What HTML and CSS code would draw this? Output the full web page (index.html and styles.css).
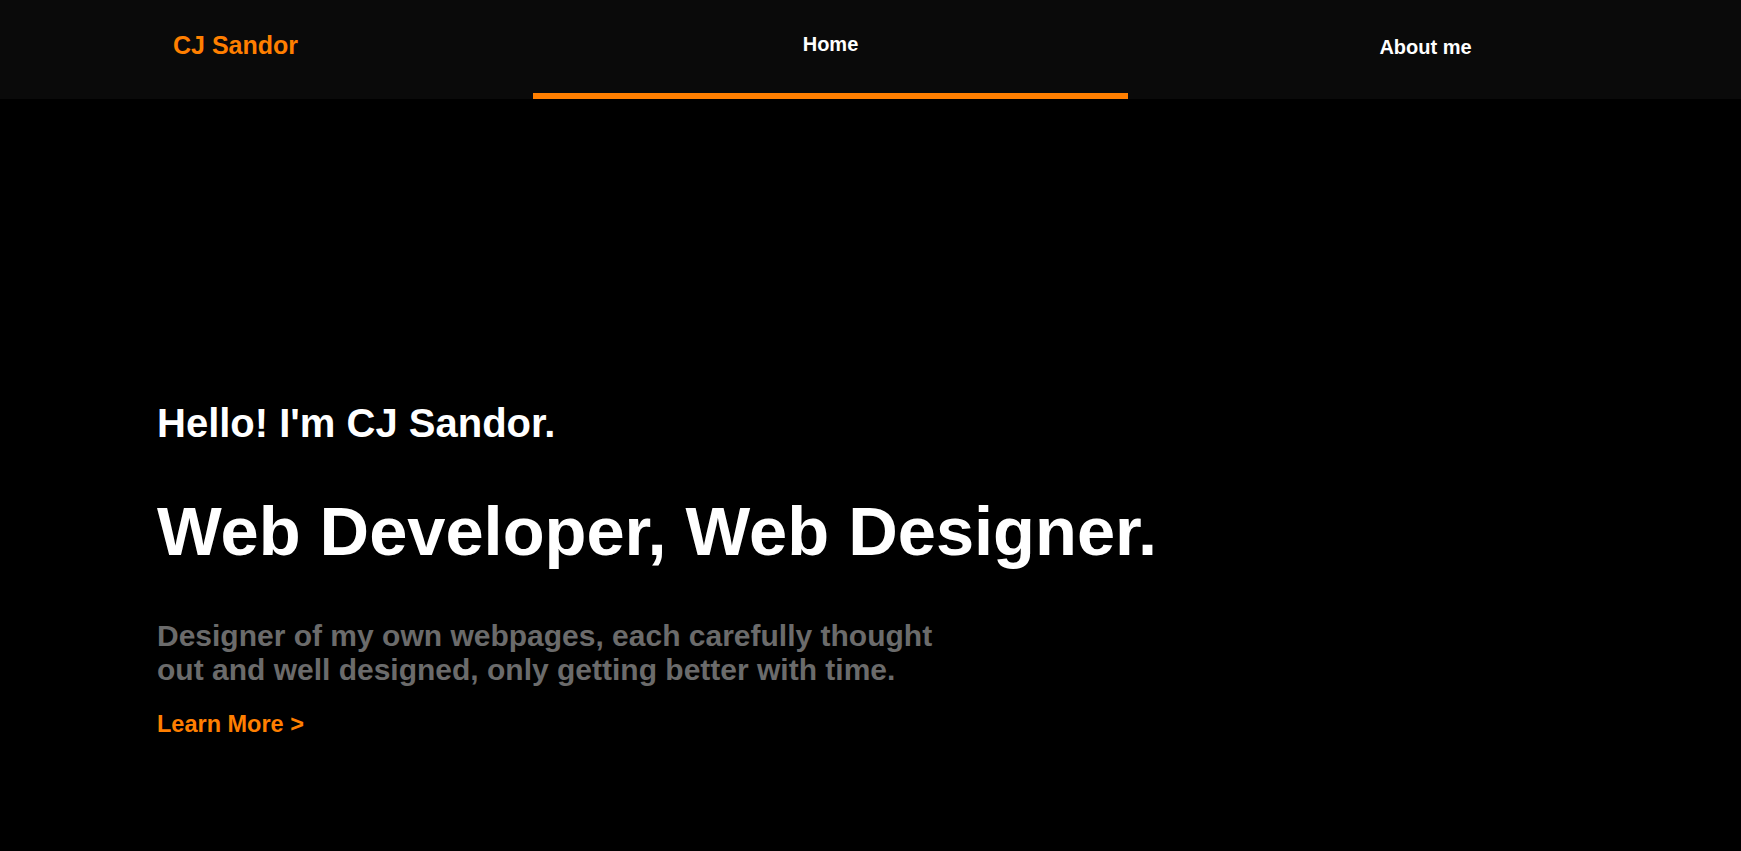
FILE: index.html
```html
<!DOCTYPE html>
<html lang="en">
<head>
<meta charset="utf-8">
<title>CJ Sandor</title>
<link rel="stylesheet" href="styles.css">
</head>
<body>
<header class="nav">
  <div class="brand">CJ Sandor</div>
  <a class="nav-link active" href="#">Home</a>
  <a class="nav-link" href="#">About me</a>
</header>
<main class="hero">
  <h2 class="hello">Hello! I'm CJ Sandor.</h2>
  <h1 class="title">Web Developer, Web Designer.</h1>
  <p class="desc">Designer of my own webpages, each carefully thought out and well designed, only getting better with time.</p>
  <a class="more" href="#">Learn More &gt;</a>
</main>
</body>
</html>
```
FILE: styles.css
```css
* { box-sizing: border-box; }
html, body {
  margin: 0;
  padding: 0;
  background: #000;
  font-family: "Liberation Sans", Arial, sans-serif;
  font-weight: bold;
}
body { min-height: 851px; }

.nav {
  display: grid;
  grid-template-columns: 1fr 595px 595px;
  height: 99px;
  padding-right: 18px;
  background: #0a0a0a;
}
.brand {
  display: flex;
  align-items: center;
  padding-left: 173px;
  padding-bottom: 8px;
  color: #ff7f00;
  font-size: 25px;
}
.nav-link {
  display: flex;
  align-items: center;
  justify-content: center;
  padding-bottom: 4px;
  color: #fff;
  font-size: 20px;
  text-decoration: none;
}
.nav-link.active {
  border-bottom: 6px solid #ff7f00;
}

.hero {
  display: flex;
  flex-direction: column;
  align-items: flex-start;
  padding: 302px 0 0 157px;
}
.hello {
  margin: 0;
  color: #fff;
  font-size: 40px;
}
.title {
  margin: 46px 0 0;
  color: #fff;
  font-size: 68.6px;
}
.desc {
  width: 800px;
  margin: 48px 0 0;
  color: #6b6b6b;
  font-size: 30px;
}
.more {
  margin-top: 24px;
  color: #ff7f00;
  font-size: 23.5px;
  text-decoration: none;
}
```
